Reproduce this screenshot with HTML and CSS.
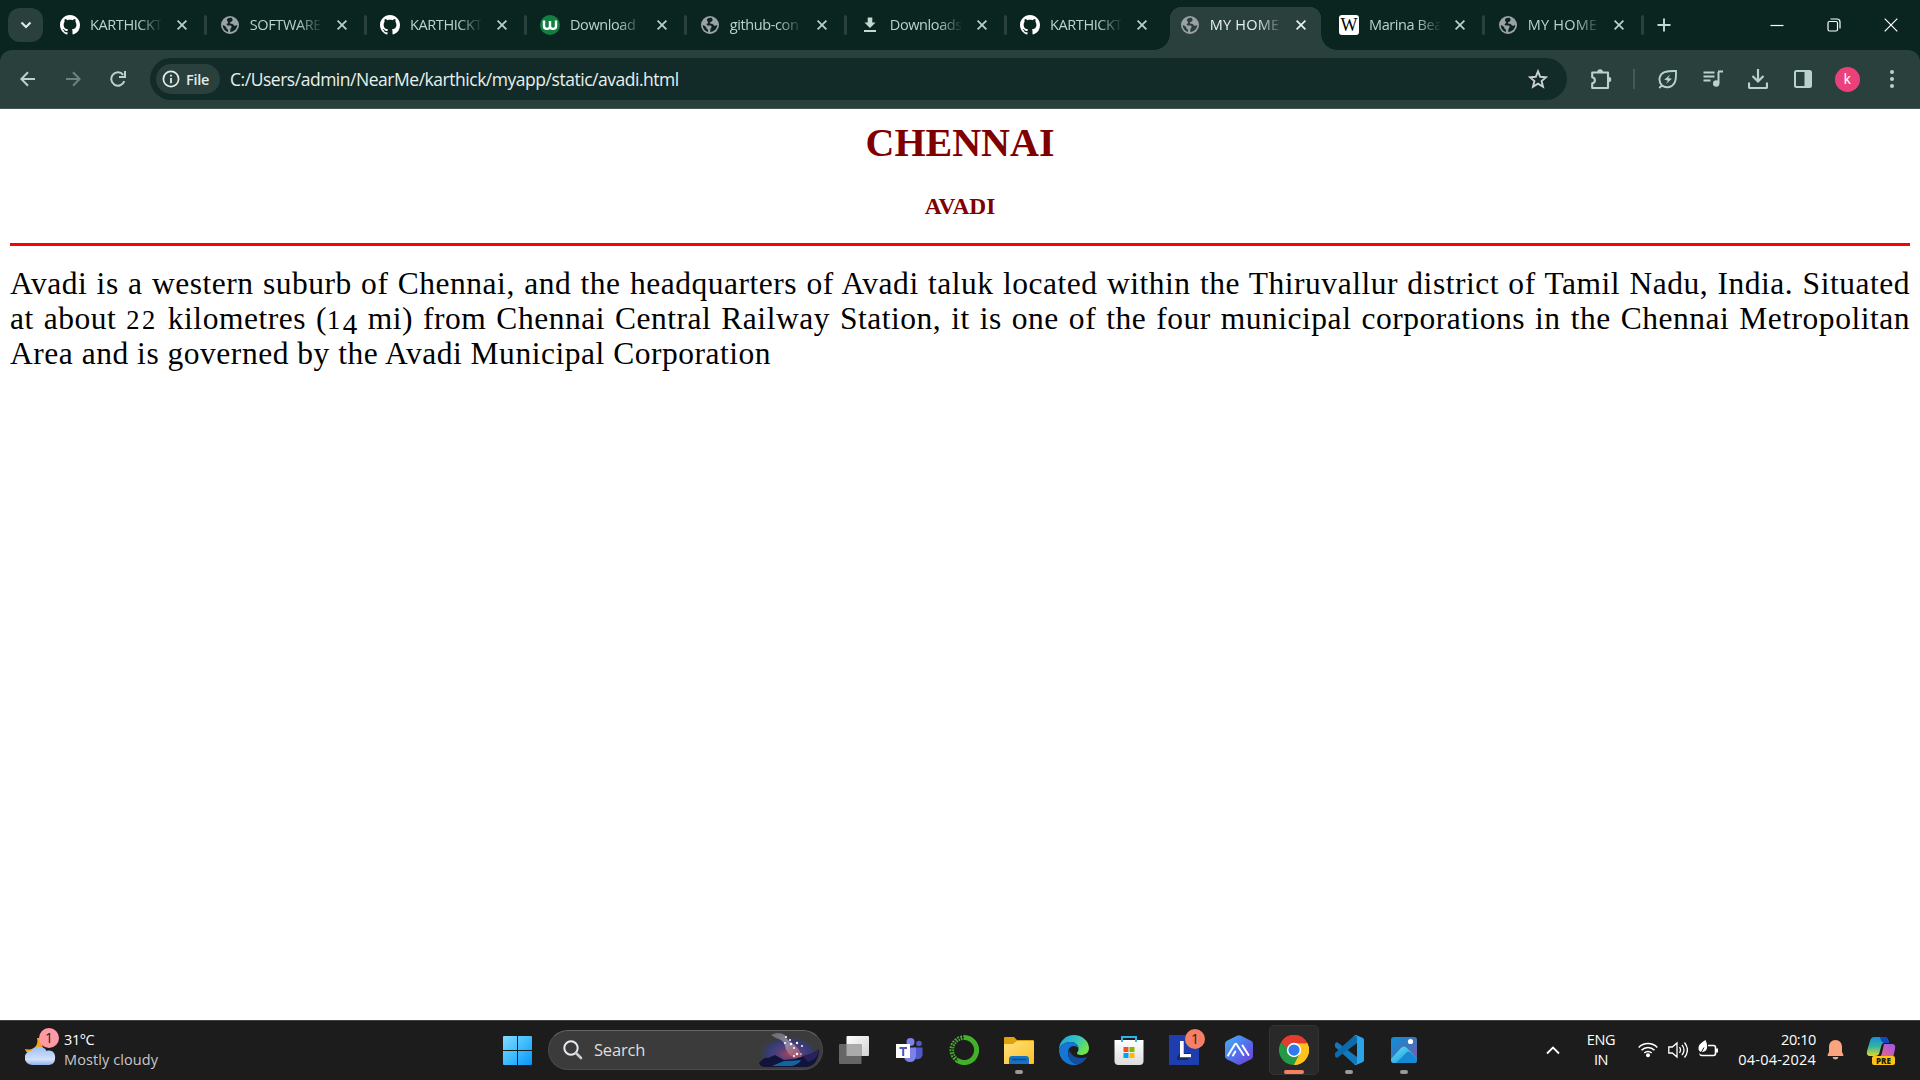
FILE: index.html
```
<!DOCTYPE html>
<html lang="en">
<head>
<meta charset="utf-8">
<title>MY HOME TOWN</title>
<link rel="stylesheet" href="styles.css">
</head>
<body>
<svg class="defs" width="0" height="0" aria-hidden="true">
  <symbol id="github" viewBox="0 0 16 16"><path fill="#fff" d="M8 0C3.58 0 0 3.58 0 8c0 3.54 2.29 6.53 5.47 7.59.4.07.55-.17.55-.38 0-.19-.01-.82-.01-1.49-2.01.37-2.53-.49-2.69-.94-.09-.23-.48-.94-.82-1.13-.28-.15-.68-.52-.01-.53.63-.01 1.08.58 1.23.82.72 1.21 1.87.87 2.33.66.07-.52.28-.87.51-1.07-1.78-.2-3.64-.89-3.64-3.95 0-.87.31-1.59.82-2.15-.08-.2-.36-1.02.08-2.12 0 0 .67-.21 2.2.82.64-.18 1.32-.27 2-.27s1.36.09 2 .27c1.53-1.04 2.2-.82 2.2-.82.44 1.1.16 1.92.08 2.12.51.56.82 1.27.82 2.15 0 3.07-1.87 3.75-3.65 3.95.29.25.54.73.54 1.48 0 1.07-.01 1.93-.01 2.2 0 .21.15.46.55.38A8.01 8.01 0 0 0 16 8c0-4.42-3.58-8-8-8z"/></symbol>
  <symbol id="globe" viewBox="0 0 18 18"><circle cx="9" cy="9" r="9" fill="#9aa0a6"/><path fill="var(--hole)" d="M10.800 1.900C7.500 1.500 6 2.700 5.900 4.100c0 1.300 1.100 1.300 1.200 2.300 0 1.200-1.400.9-1.500 2.200 0 1.300 1.900.9 3.600 1 1.600.2 1.800 1.500.9 2.500-1 1-.8 2.700-.8 4 4-.5 6.900-3.500 6.900-7.100-1.100 0-1.600.9-2.600.8-1.200-.2-.9-1.500-2.100-1.900-1-.3-2.300.2-2.500-.9-.1-1 1-1.100 1.900-1.700.9-.7 1-1.900-.1-3.400z"/><path fill="var(--hole)" d="M1.800 9c0 3.400 2.200 6.200 5.200 7v-2.400c-1.200-.2-1.600-1.100-1.700-2.100C4.900 10.200 3.200 9.700 1.800 9z"/></symbol>
  <symbol id="x" viewBox="0 0 12 12"><path d="M1.600 1.600l8.800 8.800M10.400 1.600l-8.800 8.800" stroke="currentColor" stroke-width="1.700" fill="none"/></symbol>
</svg>

<header class="tabstrip">
  <button class="tab-search"><svg width="12" height="8" viewBox="0 0 12 8"><path d="M1.500 1.500L6 6l4.500-4.500" fill="none" stroke="#dfe9e6" stroke-width="2.200"/></svg></button>
  <div class="tab"><span class="fav"><svg width="20" height="20"><use href="#github"/></svg></span><span class="label">KARTHICKT</span><svg class="close"><use href="#x"/></svg></div>
  <div class="tab"><span class="fav"><svg width="18" height="18"><use href="#globe"/></svg></span><span class="label">SOFTWARE</span><svg class="close"><use href="#x"/></svg></div>
  <div class="tab"><span class="fav"><svg width="20" height="20"><use href="#github"/></svg></span><span class="label">KARTHICKT</span><svg class="close"><use href="#x"/></svg></div>
  <div class="tab"><span class="fav"><svg width="20" height="20" viewBox="0 0 20 20"><circle cx="10" cy="10" r="10" fill="#138043"/><path d="M4 5.500v5.800c0 3.400 6 3.400 6 0V6v5.300c0 3.400 6 3.400 6 0V5.500" fill="none" stroke="#fff" stroke-width="2.400"/></svg></span><span class="label">Download</span><svg class="close"><use href="#x"/></svg></div>
  <div class="tab"><span class="fav"><svg width="18" height="18"><use href="#globe"/></svg></span><span class="label">github-con</span><svg class="close"><use href="#x"/></svg></div>
  <div class="tab"><span class="fav"><svg width="14" height="16" viewBox="0 0 14 16"><path fill="#c3dad3" d="M4.700.5h4.600v5H12.500L7 11 1.500 5.500h3.200zM1 13h12v2H1z"/></svg></span><span class="label">Downloads</span><svg class="close"><use href="#x"/></svg></div>
  <div class="tab bare"><span class="fav"><svg width="20" height="20"><use href="#github"/></svg></span><span class="label">KARTHICKT</span><svg class="close"><use href="#x"/></svg></div>
  <div class="tab active"><span class="fav"><svg width="18" height="18"><use href="#globe"/></svg></span><span class="label loose">MY HOME</span><svg class="close"><use href="#x"/></svg></div>
  <div class="tab short"><span class="fav"><span class="wiki">W</span></span><span class="label">Marina Bea</span><svg class="close"><use href="#x"/></svg></div>
  <div class="tab short"><span class="fav"><svg width="18" height="18"><use href="#globe"/></svg></span><span class="label loose">MY HOME</span><svg class="close"><use href="#x"/></svg></div>
  <button class="new-tab"><svg width="14" height="14" viewBox="0 0 14 14"><path d="M7 .5v13M.5 7h13" stroke="#c3dad3" stroke-width="1.900"/></svg></button>
  <div class="window-controls">
    <svg width="14" height="14" viewBox="0 0 14 14"><path d="M.5 7.500h13" stroke="#fff" stroke-width="1.200"/></svg>
    <svg width="14" height="14" viewBox="0 0 14 14"><rect x="1" y="3.500" width="9.500" height="9.500" rx="1.500" fill="none" stroke="#fff" stroke-width="1.200"/><path d="M3.500 1h6.500q3 0 3 3v6.500" fill="none" stroke="#fff" stroke-width="1.200"/></svg>
    <svg width="14" height="14" viewBox="0 0 14 14"><path d="M.7.7l12.600 12.600M13.300.7L.7 13.300" stroke="#fff" stroke-width="1.200"/></svg>
  </div>
</header>

<nav class="toolbar">
  <div class="nav-buttons">
    <svg width="16" height="16" viewBox="0 0 16 16"><path d="M15 8H2M8 1.200L1.400 8 8 14.800" fill="none" stroke="#b8d3cc" stroke-width="2"/></svg>
    <svg width="16" height="16" viewBox="0 0 16 16"><path d="M1 8h13M8 1.200L14.600 8 8 14.800" fill="none" stroke="#6d827d" stroke-width="2"/></svg>
    <svg width="16" height="16" viewBox="0 0 16 16"><path d="M14.300 10.200A6.700 6.700 0 1 1 13.200 3.800" fill="none" stroke="#b8d3cc" stroke-width="2"/><path d="M16 0v7H9V5h5V0z" fill="#b8d3cc"/></svg>
  </div>
  <div class="omnibox">
    <div class="chip"><svg width="18" height="18" viewBox="0 0 18 18"><circle cx="9" cy="9" r="7.600" fill="none" stroke="#e4ebe9" stroke-width="1.700"/><path d="M9 8v5.200M9 4.700v1.900" stroke="#e4ebe9" stroke-width="1.800"/></svg><span>File</span></div>
    <span class="url">C:/Users/admin/NearMe/karthick/myapp/static/avadi.html</span>
    <svg class="star" width="20" height="20" viewBox="0 0 20 20"><path d="M10 2.300l2.200 5.500 5.900.4-4.500 3.800 1.400 5.700-5-3.100-5 3.100L6.400 12 1.900 8.200l5.900-.4z" fill="none" stroke="#c9d0ce" stroke-width="1.900"/></svg>
  </div>
  <div class="actions">
    <span class="action"><svg width="22" height="22" viewBox="0 0 22 22"><path d="M18 9V4.500H2.200v4.700q2.700.4 2.700 3.100t-2.700 3.100V20H18v-6" fill="none" stroke="#b8d3cc" stroke-width="2.100" stroke-linejoin="round"/><path d="M7.300 4a2.800 2.800 0 0 1 5.600 0zM17 8.700h1.500a2.800 2.800 0 0 1 0 5.600H17z" fill="#b8d3cc"/></svg></span>
    <i class="divider"></i>
    <span class="action"><svg width="20" height="20" viewBox="0 0 20 20"><path d="M3.700 16.300C-.5 11 1.700 5 6.500 3.200 9.700 2 13.200 1.900 18 2c.1 4.800.2 8.300-1.200 11.300-2.200 4.700-8.300 6.800-13.100 3zL1.300 19" fill="none" stroke="#b8d3cc" stroke-width="1.900"/><path d="M12.200 5.500L6.300 10.800l3.500.8L8 15l5.900-5.300-3.600-.7z" fill="#b8d3cc"/></svg></span>
    <span class="action"><svg width="20" height="18" viewBox="0 0 20 18"><path d="M.5 2.500h11M.5 6.500h11M.5 10.500h7M15 1.500h5M15.500 2v11" fill="none" stroke="#b8d3cc" stroke-width="2"/><circle cx="13.200" cy="13.500" r="3.200" fill="#b8d3cc"/></svg></span>
    <span class="action"><svg width="20" height="20" viewBox="0 0 20 20"><path d="M10 0v12M4.500 7L10 12.500 15.500 7M1 13.500V18q0 1 1 1h16q1 0 1-1v-4.500" fill="none" stroke="#b8d3cc" stroke-width="2.200"/></svg></span>
    <span class="action"><svg width="18" height="18" viewBox="0 0 18 18"><rect x="1" y="1" width="16" height="16" rx="1.500" fill="none" stroke="#b8d3cc" stroke-width="2"/><path d="M10.500 1H17v16h-6.500z" fill="#b8d3cc"/></svg></span>
    <span class="action"><span class="avatar">k</span></span>
    <span class="action"><svg width="6" height="20" viewBox="0 0 6 20" fill="#b8d3cc"><circle cx="3" cy="3" r="2"/><circle cx="3" cy="10" r="2"/><circle cx="3" cy="17" r="2"/></svg></span>
  </div>
</nav>

<main class="page">
  <h1>CHENNAI</h1>
  <h3>AVADI</h3>
  <hr>
  <p>
    <span class="line">Avadi is a western suburb of Chennai, and the headquarters of Avadi taluk located within the Thiruvallur district of Tamil Nadu, India. Situated</span>
    <span class="line">at about <span class="num">22</span> kilometres (<span class="num">1</span><span class="num-low">4</span> mi) from Chennai Central Railway Station, it is one of the four municipal corporations in the Chennai Metropolitan</span>
    <span class="line last">Area and is governed by the Avadi Municipal Corporation</span>
  </p>
</main>

<footer class="taskbar">
  <div class="weather">
    <div class="weather-icon">
      <svg width="32" height="38" viewBox="0 0 32 38"><defs><linearGradient id="cloud" x1="0" y1="0" x2="0" y2="1"><stop offset="0" stop-color="#9dbdf5"/><stop offset=".7" stop-color="#d3e1fa"/><stop offset="1" stop-color="#8fb0ea"/></linearGradient></defs><path d="M12 8c2 7-3 13-12 11 1 4 4 5 8 5l10-6-3-10z" fill="#f6a21c"/><path d="M8 35a7.500 7 0 0 1-1-14.500C8 16 19 15 21.500 21 27 19 31 23.500 30 28.500 30 33 27 35 23 35z" fill="url(#cloud)"/></svg>
      <span class="badge pink">1</span>
    </div>
    <div class="weather-text"><span>31°C</span><span class="dim">Mostly cloudy</span></div>
  </div>

  <div class="apps">
    <svg class="start" width="29" height="29" viewBox="0 0 29 29"><defs><linearGradient id="win" x1="0" y1="0" x2="1" y2="1"><stop offset="0" stop-color="#83dbff"/><stop offset=".5" stop-color="#3fbdfc"/><stop offset="1" stop-color="#0794fb"/></linearGradient></defs><path d="M1 0h13v14H0V1q0-1 1-1zM15 0h13q1 0 1 1v13H15zM0 15h14v14H1q-1 0-1-1zM15 15h14v13q0 1-1 1H15z" fill="url(#win)"/></svg>
    <div class="search">
      <svg width="20" height="20" viewBox="0 0 20 20"><circle cx="8" cy="8" r="6.700" fill="none" stroke="#e8ebee" stroke-width="2"/><path d="M13 13l5 5" stroke="#c7d0da" stroke-width="2.600" stroke-linecap="round"/></svg>
      <span>Search</span>
      <svg class="sky" width="62" height="36" viewBox="0 0 62 36"><defs><radialGradient id="glow"><stop offset="0" stop-color="#a6455b"/><stop offset=".35" stop-color="#54407b"/><stop offset=".7" stop-color="#343c77"/><stop offset="1" stop-color="#3b3b3b" stop-opacity="0"/></radialGradient><linearGradient id="smoke" x1="0" y1="0" x2="1" y2="1"><stop offset="0" stop-color="#77737d"/><stop offset=".5" stop-color="#a496ae"/><stop offset="1" stop-color="#b5485a"/></linearGradient></defs><ellipse cx="31" cy="22" rx="31" ry="19" fill="url(#glow)"/><path d="M13 3q7-4 14 0 2 5 7 8 7 4 10 14l-8 1q-8-5-9-12-1-5-6-7-4-1-8-4z" fill="url(#smoke)" opacity=".8"/><path d="M1 31q5-6 9-5l7-3 9 5 11-1 12-4q8-2 12-5-1 15-12 17H7q-5 0-6-4z" fill="#111338"/><path d="M14 34l12-5q9 0 17-1-2 4-9 6z" fill="#12669f"/><path d="M45 24q9-2 16-7-1 11-11 13z" fill="#29225a"/><g fill="#fff"><circle cx="28" cy="5" r="1"/><circle cx="32" cy="8" r="1"/><circle cx="27" cy="11" r="1"/><circle cx="33" cy="12" r="1.200"/><circle cx="39" cy="11" r="1.200"/><circle cx="36" cy="16" r="1"/><circle cx="44" cy="14" r="1"/><circle cx="39" cy="22" r="1.300"/><circle cx="43" cy="22" r=".8"/><circle cx="36" cy="24" r="1"/></g></svg>
    </div>
    <div class="app"><svg width="30" height="30" viewBox="0 0 30 30"><defs><linearGradient id="tv" x1="0" y1="0" x2="1" y2="1"><stop offset="0" stop-color="#fff"/><stop offset="1" stop-color="#d2d2d2"/></linearGradient></defs><rect x="7.500" y="1" width="22.500" height="20" rx="1" fill="url(#tv)"/><rect x="0" y="9" width="22.500" height="20" rx="1" fill="#666"/><path d="M7.500 9h15v12h-15z" fill="#aaa"/></svg></div>
    <div class="app"><svg width="28" height="26" viewBox="0 0 28 26"><circle cx="15.500" cy="5" r="4" fill="#7b83eb"/><circle cx="24" cy="6.500" r="2.800" fill="#5059c9"/><path d="M19 10.500h8.500v8a5 5 0 0 1-8.500 2z" fill="#5059c9"/><path d="M9 10.500h12v8.500q-.5 6-6 6t-6-6z" fill="#7b83eb"/><rect x="1" y="7" width="14" height="14" fill="#fff"/><path d="M4.500 10h7.500v2H9.200v7h-2v-7H4.500z" fill="#4b53bc"/></svg></div>
    <div class="app"><svg width="30" height="30" viewBox="0 0 30 30"><path d="M15 2.500a12.500 12.500 0 1 1-7 22.800" fill="none" stroke="#43b02a" stroke-width="5"/><path d="M8.500 25.500A12.500 12.500 0 0 1 15 2.500" fill="none" stroke="#43b02a" stroke-width="4.600" stroke-dasharray="1.800 1"/><path d="M8.500 25.500A12.500 12.500 0 0 1 15 2.500" fill="none" stroke="#1c1c1c" stroke-width="1" stroke-dasharray="3 2"/></svg></div>
    <div class="app run"><svg width="30" height="30" viewBox="0 0 30 30"><defs><linearGradient id="folder" x1="0" y1="0" x2="1" y2="1"><stop offset="0" stop-color="#ffe07a"/><stop offset="1" stop-color="#fcc02a"/></linearGradient></defs><path d="M0 3q0-1 1-1h9l3 3h16q1 0 1 1v5H0z" fill="#dda20c"/><path d="M0 9h9l4-3h16q1 0 1 1v21q0 1-1 1H0z" fill="url(#folder)"/><path d="M5 29v-5q0-3 3-3h14q3 0 3 3v5z" fill="#1673c2"/><path d="M8 24.500h14" stroke="#084b91" stroke-width="1.500"/></svg></div>
    <div class="app"><svg width="30" height="30" viewBox="0 0 30 30"><defs><linearGradient id="edge" x1="0" y1="0" x2="1" y2=".5"><stop offset="0" stop-color="#199fdf"/><stop offset=".55" stop-color="#32c2c3"/><stop offset="1" stop-color="#71e34b"/></linearGradient></defs><path d="M0 15C0 6 7 0 15 0s15 6 15 13c0 5-4 7-8 7-3 0-4-1-4-2 0-1 1.500-1 1.500-4 0-4-3-7-8-7C6 7 1 10 0 15z" fill="url(#edge)"/><path d="M0 15C1 10 6 7 11.500 7c5 0 8 3 8 6-1-1-2.500-2-4.500-2-4 0-6 3-6 7 0 6 5 10 10 11.500-2 .5-4 .5-4 .5C6 30 0 23 0 15z" fill="#1577d3"/><path d="M10 15c-3 7 2 14.500 9 14.500 4-1 7-4 9.500-8-1.500 1-4.500 1.500-6.500 1.500-6 0-10-3-12-8z" fill="#114f9e"/></svg></div>
    <div class="app"><svg width="30" height="30" viewBox="0 0 30 30"><defs><linearGradient id="store" x1="0" y1="0" x2="0" y2="1"><stop offset="0" stop-color="#fff"/><stop offset="1" stop-color="#dcdcdc"/></linearGradient></defs><path d="M.5 5h29v21q0 4-4 4h-21q-4 0-4-4z" fill="url(#store)"/><path d="M8 7V2h14v5" fill="none" stroke="#2ab4ec" stroke-width="2"/><path d="M9.500 12h5v5h-5z" fill="#f25022"/><path d="M15.500 12h5v5h-5z" fill="#7fba00"/><path d="M9.500 18h5v5h-5z" fill="#00a4ef"/><path d="M15.500 18h5v5h-5z" fill="#ffb900"/></svg></div>
    <div class="app"><svg width="30" height="30" viewBox="0 0 30 30"><path d="M0 0h30v30H0z" fill="#1e3dae"/><path d="M8 22l3-4h11v4l-4 3H8z" fill="#102d5c"/><path d="M11 6h3.700v13H22v3.200H11z" fill="#fff"/></svg><span class="badge coral">1</span></div>
    <div class="app"><svg width="30" height="30" viewBox="0 0 30 30"><defs><linearGradient id="hex" x1="0" y1="0" x2="1" y2="1"><stop offset="0" stop-color="#43b5ee"/><stop offset=".5" stop-color="#5273ee"/><stop offset="1" stop-color="#7438d8"/></linearGradient></defs><path d="M13 .7q2-1 4 0l10 5q2 1 2 3v12.600q0 2-2 3l-10 5q-2 1-4 0l-10-5q-2-1-2-3V8.700q0-2 2-3z" fill="url(#hex)"/><path d="M4 20.500l6.800-11q1-1.500 2 0L19.500 20M9 20.500l2.300-4M18.500 10.500L24.500 20" fill="none" stroke="#fff" stroke-width="2" stroke-linecap="round" stroke-linejoin="round"/></svg></div>
    <div class="app current"><svg width="30" height="30" viewBox="0 0 48 48"><path d="M24 24L3.200 12A24 24 0 0 1 44.800 12z" fill="#e33b2e"/><path d="M24 24L44.800 12A24 24 0 0 1 24 48z" fill="#fcc31e"/><path d="M24 48A24 24 0 0 1 3.200 12L14.500 29.500 24 34l9.500-4.500z" fill="#249a46"/><path d="M24 13h21.200A24 24 0 0 1 24 48l9.500-18.500z" fill="#fcc31e"/><path d="M3.200 12A24 24 0 0 1 45.200 13H24a11 11 0 0 0-11 11z" fill="#e33b2e"/><path d="M3.200 12L14.500 31l8-2-9-7z" fill="#249a46"/><circle cx="24" cy="24" r="11.500" fill="#fff"/><circle cx="24" cy="24" r="9" fill="#317aed"/></svg></div>
    <div class="app run"><svg width="30" height="30" viewBox="0 0 30 30"><path d="M1 8.500l2-1.500 20 15v6.500L21 30 1 12z" fill="#1479bc"/><path d="M1 21.500L3 23l20-15V1.500L21 0 1 18z" fill="#0a6cad"/><path d="M22 0l7 3q1 .5 1 2v20q0 1.500-1 2l-7 3q-1 0-2-1 3 1 3-2V3q0-3-3-2 1-1 2-1z" fill="#29a4ea"/></svg></div>
    <div class="app run"><svg width="26" height="26" viewBox="0 0 26 26"><defs><linearGradient id="photo" x1="0" y1="0" x2="1" y2="1"><stop offset="0" stop-color="#0c91dd"/><stop offset=".5" stop-color="#3d75bb"/><stop offset="1" stop-color="#8655ae"/></linearGradient><linearGradient id="hill" x1="0" y1="0" x2="1" y2="1"><stop offset="0" stop-color="#65e5f9"/><stop offset="1" stop-color="#168ad5"/></linearGradient></defs><rect width="26" height="26" rx="3" fill="url(#photo)"/><path d="M0 22L10 11q3-3 6 0l10 10v2q0 3-3 3H3q-3 0-3-3z" fill="url(#hill)"/><path d="M5 26l11-11q2-1 4 1l6 6v1q0 3-3 3z" fill="#168bd4"/><circle cx="19.500" cy="4.500" r="2.600" fill="#fff"/></svg></div>
  </div>

  <div class="tray">
    <svg class="caret" width="14" height="9" viewBox="0 0 14 9"><path d="M1 7.500l6-6 6 6" fill="none" stroke="#fff" stroke-width="1.800"/></svg>
    <div class="lang"><span>ENG</span><span>IN</span></div>
    <div class="status">
      <svg width="20" height="16" viewBox="0 0 20 16"><g fill="none" stroke="#fff" stroke-width="1.500"><path d="M.7 5.500a13 13 0 0 1 18.600 0M3.500 8.300a9 9 0 0 1 13 0M6.300 11a5.200 5.200 0 0 1 7.400 0"/></g><circle cx="10" cy="13.300" r="2" fill="#fff"/></svg>
      <svg width="20" height="18" viewBox="0 0 20 18"><path d="M.8 6h3.500L9 2v14l-4.700-4H.8zM11.500 6.200q2 2.800 0 5.600M14 3.800q4 5.200 0 10.400M16.500 1.500q5.800 7.500 0 15" fill="none" stroke="#fff" stroke-width="1.300"/></svg>
      <svg width="20" height="20" viewBox="0 0 20 20"><path d="M10 5.500h5.500q2 0 2 2v6q0 2-2 2H4q-2 0-2-2" fill="none" stroke="#fff" stroke-width="1.600"/><path d="M18 8.500h2v4h-2zM7.500 0C3 3 .5 4.500.5 8.500c0 2 1 3 2.500 3.500C8 12 9.500 9.500 9 5.500 9 3.500 8.300 2 7.500 0z" fill="#fff"/><path d="M2 14.500l4-7" stroke="#1c1c1c" stroke-width="1"/></svg>
    </div>
    <div class="clock"><span>20:10</span><span class="date">04-04-2024</span></div>
    <svg class="bell" width="17" height="20" viewBox="0 0 17 20"><path d="M8.500 0C4.500 0 2 3 2 7v5L.5 15q0 1 1 1h14q1 0 1-1L15 12V7c0-4-2.500-7-6.500-7zM5.500 17h6q-.7 2.500-3 2.500t-3-2.500z" fill="#fba47e"/></svg>
    <div class="copilot">
      <svg width="30" height="28" viewBox="0 0 30 28"><defs><linearGradient id="cp1" x1="0" y1="0" x2="0" y2="1"><stop offset="0" stop-color="#168dde"/><stop offset=".5" stop-color="#37b39b"/><stop offset="1" stop-color="#e0d92b"/></linearGradient><linearGradient id="cp2" x1="1" y1="0" x2="0" y2="1"><stop offset="0" stop-color="#9b57ec"/><stop offset="1" stop-color="#f56a72"/></linearGradient></defs><path d="M8 1h11q3 0 4 6h-5q-2 0-3 4l-2 7q-1 2-4 2H4q-4 0-3-5L4 5q1-4 4-4z" fill="url(#cp1)"/><path d="M14 1h5q3 0 4 6h-5q-3-1-4-6z" fill="#1147c2"/><path d="M18 8h8q4 0 3 5l-2 9H12q3-1 4-5l2-9z" fill="url(#cp2)"/></svg>
      <span class="pre">PRE</span>
    </div>
  </div>
</footer>
</body>
</html>
```
FILE: styles.css
```
* { box-sizing: border-box; }

body {
  margin: 0;
  width: 1920px;
  height: 1080px;
  overflow: hidden;
  display: flex;
  flex-direction: column;
  background: linear-gradient(#0a2420 80px, #fff 80px);
  font-family: "Open Sans", "Noto Sans", sans-serif;
}

svg { display: block; flex: none; }
.defs { position: absolute; }
button { border: 0; padding: 0; background: none; }

/* Tab strip */
.tabstrip {
  flex: none;
  height: 50px;
  display: flex;
  align-items: center;
  padding-left: 8px;
  background: #0a2420;
}
.tab-search {
  width: 35px;
  height: 34px;
  margin-right: 4px;
  display: flex;
  align-items: center;
  justify-content: center;
  border-radius: 12px;
  background: #29403c;
}
.tab {
  --hole: #0a2420;
  position: relative;
  flex: none;
  width: 160px;
  height: 50px;
  display: flex;
  align-items: center;
  padding-left: 13px;
  color: #b9d3cc;
}
.tab::after {
  content: "";
  margin-left: 16px;
  width: 3px;
  height: 20px;
  border-radius: 2px;
  background: #29403c;
}
.tab.bare::after, .tab.active::after { visibility: hidden; }
.tab.short, .tab.active { width: 159px; }
.tab.short .close, .tab.active .close { margin-left: 14px; }
.fav {
  width: 20px;
  height: 20px;
  margin-right: 10px;
  display: flex;
  align-items: center;
  justify-content: center;
}
.wiki {
  width: 20px;
  height: 20px;
  border-radius: 3px;
  background: #fff;
  color: #000;
  font: 18px/20px "Liberation Serif", serif;
  text-align: center;
  letter-spacing: -1px;
  text-indent: -1px;
}
.label {
  width: 72px;
  overflow: hidden;
  white-space: nowrap;
  font-size: 14.5px;
  line-height: 20px;
  letter-spacing: -0.4px;
  -webkit-mask-image: linear-gradient(90deg, #000 48px, transparent 73px);
  mask-image: linear-gradient(90deg, #000 48px, transparent 73px);
}
.label.loose { letter-spacing: 0.2px; }
.close { width: 12px; height: 12px; margin-left: 15px; }
.tab.active {
  --hole: #29403c;
  color: #e8f2ef;
  isolation: isolate;
}
.tab.active::before {
  content: "";
  position: absolute;
  z-index: -1;
  left: -13px;
  right: -11px;
  top: 7px;
  bottom: 0;
  background:
    radial-gradient(circle at 0 0, transparent 15.5px, #29403c 16px) 0 100% / 16px 16px no-repeat,
    radial-gradient(circle at 100% 0, transparent 15.5px, #29403c 16px) 100% 100% / 16px 16px no-repeat,
    radial-gradient(circle at 12px 12px, #29403c 12px, transparent 12.5px) 16px 0 / 12px 12px no-repeat,
    radial-gradient(circle at 0 12px, #29403c 12px, transparent 12.5px) calc(100% - 16px) 0 / 12px 12px no-repeat,
    linear-gradient(#29403c, #29403c) 50% 0 / calc(100% - 56px) 100% no-repeat,
    linear-gradient(#29403c, #29403c) 50% 12px / calc(100% - 32px) 100% no-repeat;
}
.new-tab { margin-left: 13px; }
.window-controls {
  margin-left: auto;
  display: flex;
  gap: 43px;
  padding-right: 22px;
}

/* Toolbar */
.toolbar {
  flex: none;
  height: 59px;
  display: flex;
  align-items: center;
  background: #29403c;
  border-bottom: 1px solid #435653;
  border-radius: 12px 12px 0 0;
}
.nav-buttons { display: flex; gap: 29px; padding-left: 20px; width: 150px; }
.omnibox {
  width: 1417px;
  height: 42px;
  display: flex;
  align-items: center;
  padding-left: 6px;
  padding-right: 19px;
  border-radius: 21px;
  background: #122b28;
}
.chip {
  width: 64px;
  height: 30px;
  display: flex;
  align-items: center;
  gap: 6px;
  padding-left: 6px;
  border-radius: 15px;
  background: #29403c;
  color: #e4ebe9;
  font-size: 14.5px;
  font-weight: 600;
  letter-spacing: -0.3px;
}
.url {
  margin-left: 10px;
  color: #e8f0ee;
  font-size: 17.5px;
  letter-spacing: -0.47px;
  white-space: nowrap;
}
.star { margin-left: auto; }
.actions { display: flex; align-items: center; padding-left: 12px; }
.action { width: 44.8px; display: flex; justify-content: center; }
.actions .divider { width: 2px; height: 20px; margin: 0 11px 0 9px; background: #415b55; }
.avatar {
  width: 25px;
  height: 25px;
  border-radius: 50%;
  background: #ec407a;
  color: #fff;
  font: 14px/24px Roboto, sans-serif;
  text-align: center;
}

/* Document */
.page {
  flex: 1;
  padding: 11px 10px;
  background: #fff;
  font-family: "Liberation Serif", "Times New Roman", serif;
}
.page h1, .page h3 { margin: 0; color: maroon; text-align: center; }
.page h1 { font-size: 40px; line-height: 46px; }
.page h3 { margin-top: 27px; font-size: 23.4px; line-height: 27px; }
.page hr { height: 3px; margin: 23px 0 20px; border: 0; background: #f00; }
.page p {
  margin: 0;
  color: #000;
  font-size: 31.5px;
  line-height: 35px;
  letter-spacing: 0.52px;
}
.line { display: block; height: 35px; text-align: justify; text-align-last: justify; }
.line.last { text-align-last: left; }
.num, .num-low { line-height: 1; }
.num { font-size: 0.84em; letter-spacing: 2.5px; }
.num-low { font-size: 0.92em; position: relative; top: 0.16em; }

/* Taskbar */
.taskbar {
  flex: none;
  height: 60px;
  display: flex;
  align-items: center;
  border-top: 1px solid #404040;
  padding-bottom: 1px;
  background: #1c1c1c;
  color: #fff;
  font-size: 14.5px;
  line-height: 20px;
}
.weather { width: 503px; display: flex; padding-left: 25px; }
.weather-icon { position: relative; width: 39px; }
.weather-text, .lang, .clock { display: flex; flex-direction: column; letter-spacing: -0.4px; }
.dim { color: #c8c8c8; letter-spacing: 0.1px; }
.badge {
  position: absolute;
  width: 20px;
  height: 20px;
  border-radius: 50%;
  color: #1c1c1c;
  font-size: 14px;
  line-height: 20px;
  text-align: center;
}
.pink { left: 14px; top: -2px; background: #ff99a4; }
.coral { right: 4px; top: 4px; background: #f67f66; }
.apps { display: flex; align-items: center; }
.search {
  width: 275px;
  height: 40px;
  margin: 0 6px 0 16px;
  display: flex;
  align-items: center;
  gap: 11px;
  padding-left: 14px;
  border: 1px solid #4b4b4b;
  border-top-color: #666;
  border-radius: 20px;
  background: #3b3b3b;
  color: #dedede;
  font-size: 16.5px;
  letter-spacing: -0.2px;
}
.sky { margin-left: auto; margin-right: 2px; }
.app {
  position: relative;
  width: 50px;
  height: 50px;
  margin-right: 5px;
  display: flex;
  align-items: center;
  justify-content: center;
  border-radius: 5px;
}
.current { background: #292929; border: 1px solid #333; }
.run::after, .current::after {
  content: "";
  position: absolute;
  bottom: 1px;
  left: 21px;
  width: 8px;
  height: 4px;
  border-radius: 2px;
  background: #999;
}
.current::after { bottom: 0; left: 14px; width: 20px; background: #f67f66; }
.tray { margin-left: auto; display: flex; align-items: center; padding-right: 24px; }
.lang { width: 40px; margin-left: 21px; text-align: center; }
.status { display: flex; align-items: center; gap: 10px; margin-left: 17px; }
.clock { width: 98px; text-align: right; }
.date { letter-spacing: 0.2px; }
.bell { margin-left: 11px; }
.copilot { position: relative; margin-left: 22px; }
.pre {
  position: absolute;
  left: 6px;
  bottom: -1px;
  width: 23px;
  height: 9px;
  border-radius: 2px;
  background: #ffc414;
  color: #1c1c1c;
  font-size: 8px;
  font-weight: 800;
  line-height: 9px;
  text-align: center;
}
```
